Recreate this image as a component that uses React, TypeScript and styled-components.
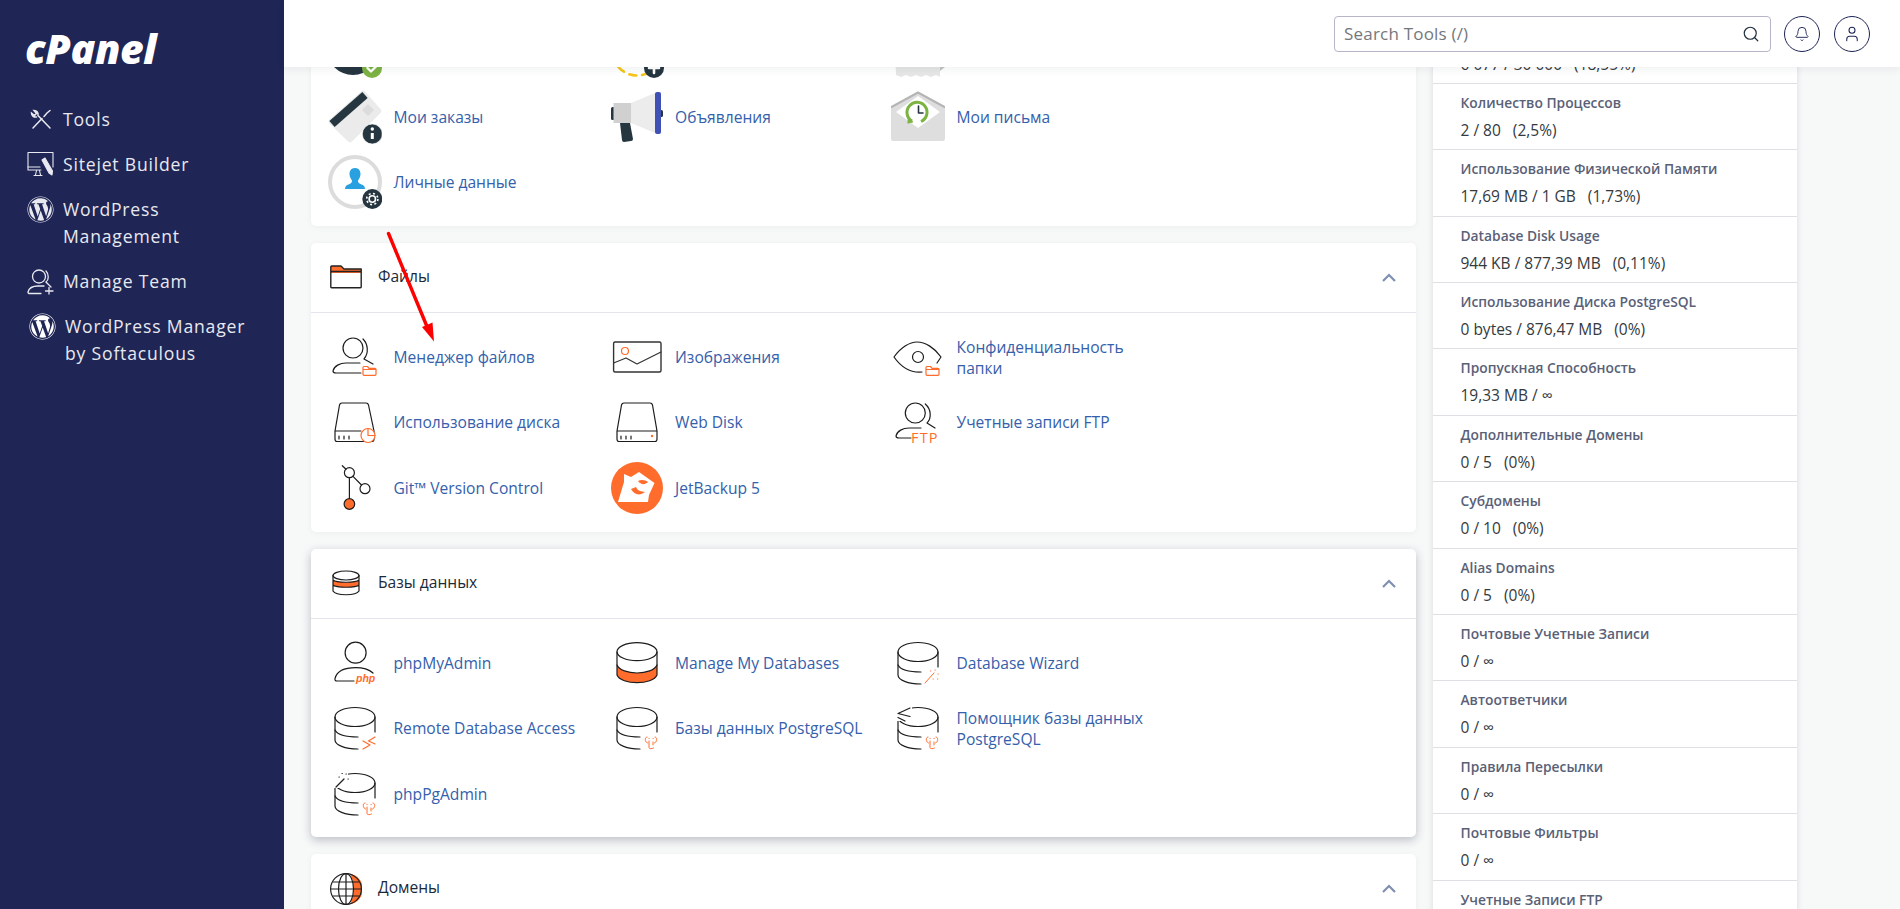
import * as React from "react";
import styled, { createGlobalStyle } from "styled-components";
import { Search, Bell, User } from "lucide-react";
import { FaWordpress } from "react-icons/fa";

const ORANGE = "#ff6c2c";
const INK = "#1c1c1c";
const DARK = "#263640";

const GlobalStyle = createGlobalStyle`
  html, body {
    margin: 0;
    height: 100%;
    overflow: hidden;
    background: #f7f8f8;
    font-family: "Open Sans", "Noto Sans", sans-serif;
  }
`;

const Page = styled.div`
  position: relative;
  display: flex;
  height: 909px;
  overflow: hidden;
`;

const Sidebar = styled.aside`
  flex: 0 0 284px;
  padding: 27px 0 0 27px;
  box-sizing: border-box;
  background: #1f2555;
  color: #e8e9f0;
`;

const Logo = styled.div`
  height: 78.5px;
  margin-left: -2px;
  font-size: 41px;
  line-height: 42px;
  font-weight: 800;
  font-style: italic;
  letter-spacing: -0.4px;
  color: #fff;
`;

const Nav = styled.nav`
  display: flex;
  flex-direction: column;
  gap: 18px;
`;

const NavItem = styled.a<{ $nudge?: number }>`
  display: flex;
  align-items: flex-start;
  gap: 9px;
  box-sizing: border-box;
  width: ${(p) => 231 + (p.$nudge || 0)}px;
  padding-left: ${(p) => p.$nudge || 0}px;
  font-size: 17.6px;
  line-height: 27px;
  letter-spacing: 0.8px;
`;

const NavIcon = styled.span`
  flex: 0 0 27px;
  height: 27px;
  display: flex;
  align-items: center;
  justify-content: center;
  color: #e8e9f0;
`;

const Main = styled.div`
  flex: 1;
  min-width: 0;
  display: flex;
  flex-direction: column;
`;

const TopBar = styled.header`
  position: relative;
  z-index: 2;
  flex: 0 0 67px;
  display: flex;
  align-items: center;
  justify-content: flex-end;
  gap: 14px;
  padding: 0 30px 0 0;
  background: #fff;
  box-shadow: 0 2px 8px rgba(30, 40, 60, 0.07);
`;

const SearchBox = styled.div`
  width: 437px;
  height: 36px;
  box-sizing: border-box;
  display: flex;
  align-items: center;
  justify-content: space-between;
  padding: 0 10px 0 9px;
  margin-right: -1px;
  border: 1px solid #b7b6c9;
  border-radius: 4px;
  color: #74777c;
  font-size: 17px;
  letter-spacing: 0.2px;
  svg {
    color: #1f2d3d;
  }
`;

const RoundButton = styled.button`
  width: 36px;
  height: 36px;
  padding: 0;
  display: flex;
  align-items: center;
  justify-content: center;
  border: 1px solid #1f2555;
  border-radius: 50%;
  background: #fff;
  color: #1f2555;
`;

const Content = styled.div`
  flex: 1;
  min-height: 0;
  overflow: hidden;
  display: flex;
  align-items: flex-start;
  gap: 17px;
  padding-left: 27px;
`;

const CardColumn = styled.div`
  flex: 0 0 1105px;
  margin-top: -60px;
  display: flex;
  flex-direction: column;
  gap: 17px;
`;

const Card = styled.section<{ $raised?: boolean }>`
  background: #fff;
  border-radius: 5px;
  box-shadow: ${(p) =>
    p.$raised
      ? "0 3px 10px rgba(30, 40, 60, 0.28)"
      : "0 1px 6px rgba(30, 40, 60, 0.05)"};
`;

const CardHeader = styled.div`
  height: 70px;
  box-sizing: border-box;
  display: flex;
  align-items: center;
  gap: 16px;
  padding: 0 20px 0 19px;
  border-bottom: 1px solid #e4e5ec;
  color: #1b2a3a;
  font-size: 15.6px;
`;

const HeaderIcon = styled.span`
  flex: 0 0 32px;
  height: 32px;
`;

const HeaderTitle = styled.span`
  flex: 1;
  padding-bottom: 3px;
`;

const Items = styled.div`
  display: grid;
  grid-template-columns: repeat(3, 281.5px);
  grid-auto-rows: 65.4px;
  padding: 11.6px 0 11px 17px;
`;

const Item = styled.a`
  display: flex;
  align-items: center;
  gap: 11.5px;
  color: #3560ab;
  font-size: 15.6px;
  line-height: 21px;
`;

const ItemIcon = styled.span`
  flex: 0 0 54px;
  height: 54px;
`;

const ItemLabel = styled.span`
  max-width: 200px;
  padding-top: 1px;
`;

const StatsPanel = styled.aside`
  flex: 0 0 364px;
  margin-top: -49.5px;
  background: #fff;
  box-shadow: 0 0 6px rgba(30, 40, 60, 0.14);
`;

const StatRow = styled.div`
  height: 66.4px;
  box-sizing: border-box;
  padding: 10px 0 0 27.5px;
  border-bottom: 1px solid #dfe0e3;
`;

const StatLabel = styled.div`
  height: 18px;
  font-size: 13.8px;
  line-height: 18px;
  font-weight: 600;
  color: #5a6177;
`;

const StatValue = styled.div`
  margin-top: 8px;
  font-size: 15.5px;
  line-height: 20px;
  color: #343a40;
`;

const StatPercent = styled.span`
  margin-left: 12px;
`;

const ArrowLayer = styled.svg`
  position: absolute;
  left: 380px;
  top: 225px;
  z-index: 1;
  pointer-events: none;
`;

const Svg: React.FC<{ size?: number; children: React.ReactNode }> = ({ size = 54, children }) => (
  <svg width={size} height={size} viewBox={`0 0 ${size} ${size}`} fill="none" stroke={INK} strokeWidth={1.2} strokeLinecap="round" strokeLinejoin="round" style={{ display: "block" }}>
    {children}
  </svg>
);

const SmallFolder: React.FC = () => (
  <path d="M35 37.5 a1 1 0 0 1 1-1 h3.5 l1.5 1.8 h6 a1 1 0 0 1 1 1 v5 a1 1 0 0 1-1 1 h-11 a1 1 0 0 1-1-1 z M35 39.5 h13" stroke={ORANGE} fill="#fff" />
);

const PersonLines: React.FC = () => (
  <g>
    <circle cx="25" cy="18" r="10" />
    <path d="M35 9 C40 14 41 23 36 29 L45 34" />
    <path d="M33 43 H8 Q5 43 5 41 C6 36 12 33 18 33 H32" />
  </g>
);

const Db: React.FC = () => (
  <g>
    <ellipse cx="27" cy="16" rx="20" ry="9.5" />
    <path d="M7 16 V39 C7 44 17 48 30 48" />
    <path d="M7 29 C9 33 17 36 30 36" />
    <path d="M47 16 V31" />
  </g>
);

const Elephant: React.FC = () => (
  <g stroke={ORANGE} strokeWidth={1}>
    <path d="M37 36 C34.5 36 34.500 41 37.500 42" />
    <path d="M45 36 C47.500 36 47.500 41 44.500 42" />
    <path d="M39 40 V46.500 C39 48 42 48 43.500 47" />
    <path d="M43 41 V44" />
    <path d="M39 37.500 h.2 M43 37.500 h.2" />
  </g>
);

const icons: Record<string, React.ReactNode> = {
  check: (
    <Svg>
      <circle cx="25" cy="25" r="26" fill={DARK} stroke="none" />
      <circle cx="44" cy="44" r="10" fill="#7cb342" stroke="none" />
      <path d="M39.5 44 l3.5 3.5 l6-6" stroke="#fff" strokeWidth={2.4} />
    </Svg>
  ),
  dashed: (
    <Svg>
      <circle cx="27" cy="27" r="24.5" stroke="#f5c518" strokeWidth={2.6} strokeDasharray="7 6" />
      <circle cx="44" cy="44" r="10" fill={DARK} stroke="none" />
      <path d="M39 44 h10 M44 39 v10" stroke="#fff" strokeWidth={2.6} />
    </Svg>
  ),
  receipt: (
    <Svg>
      <path d="M3 0 H49 V53 l-4-2 l-5 2 l-5-2 l-5 2 l-5-2 l-5 2 l-5-2 l-5 2 l-5-2 z" fill="#e6e6e6" stroke="none" />
      <path d="M49 47 L54 43 V0 H49 z" fill="#c4c4c4" stroke="none" />
    </Svg>
  ),
  orders: (
    <Svg>
      <path d="M33 1.5 a3 3 0 0 1 4 0 L52.5 19 a3 3 0 0 1 0 4 L24 51.5 a3 3 0 0 1-4 0 L1.5 33.5 a3 3 0 0 1 0-4 z" fill="#ebebeb" stroke="none" />
      <path d="M4 34 L37 5" stroke={DARK} strokeWidth={8} strokeLinecap="butt" />
      <path d="M40 14 L46 20 L40 26 L34 20 z" fill="#dcdcdc" stroke="none" />
      <circle cx="44.3" cy="44" r="10" fill={DARK} stroke="#fff" strokeWidth={0.6} />
      <path d="M44.3 43 v6" stroke="#fff" strokeWidth={3} strokeLinecap="butt" />
      <circle cx="44.3" cy="39" r="1.7" fill="#fff" stroke="none" />
    </Svg>
  ),
  megaphone: (
    <Svg>
      <path d="M10 33 H20 L23 49 a2 2 0 0 1-2 2 L14 52 a2 2 0 0 1-2-2 z" fill={DARK} stroke="none" />
      <rect x="1" y="17" width="4" height="13" rx="1.5" fill={DARK} stroke="none" />
      <rect x="3.5" y="13" width="18" height="20" fill="#d0d0d0" stroke="none" />
      <path d="M21 13 L45 3 V43 L21 33 z" fill="#ececec" stroke="none" />
      <rect x="50" y="20" width="3" height="7" rx="1.5" fill={DARK} stroke="none" />
      <rect x="45" y="2" width="6" height="42" rx="2" fill="#3f51b5" stroke="none" />
    </Svg>
  ),
  mail: (
    <Svg>
      <path d="M0 17 L27 2.5 L54 17 V49 a2 2 0 0 1-2 2 H2 a2 2 0 0 1-2-2 z" fill="#dedede" stroke="none" />
      <path d="M0.5 17 L27 2.5 L53.5 17" stroke="#b5b5b5" strokeWidth={2} />
      <path d="M27 6 L49 22 L27 38 L5 22 z" fill="#fff" stroke="none" />
      <path d="M21 31 A10 10 0 1 1 30 31.5" stroke="#7cb342" strokeWidth={3} strokeLinecap="butt" />
      <path d="M17.5 26.5 L21.5 32 L17 33 z" fill="#7cb342" stroke="#7cb342" />
      <path d="M27.5 16 V23 H32" stroke={DARK} strokeWidth={1.6} />
    </Svg>
  ),
  profile: (
    <Svg>
      <circle cx="27" cy="27" r="25" stroke="#dcdcdc" strokeWidth={4} />
      <path d="M27 13 c4 0 5.5 3 5.5 6 c0 3-1.5 5-2.5 6.5 c0 2.5 1 3 3.5 4 c2 .8 3.5 1.5 3.5 4.5 H17 c0-3 1.5-3.7 3.5-4.5 c2.5-1 3.5-1.5 3.5-4 c-1-1.5-2.5-3.5-2.5-6.5 c0-3 1.5-6 5.500-6 z" fill="#29a0e0" stroke="none" />
      <circle cx="44.3" cy="44" r="10" fill={DARK} stroke="none" />
      <circle cx="44.3" cy="44" r="3.2" stroke="#fff" strokeWidth={1.6} />
      <circle cx="44.3" cy="44" r="5.6" stroke="#fff" strokeWidth={1.6} strokeDasharray="2 2.400" strokeLinecap="butt" />
    </Svg>
  ),
  fileManager: (
    <Svg>
      <PersonLines />
      <SmallFolder />
    </Svg>
  ),
  images: (
    <Svg>
      <rect x="3.6" y="12" width="47.4" height="30" rx="1.5" stroke="#333" strokeWidth={1.4} />
      <circle cx="15" cy="21" r="3.5" stroke={ORANGE} />
      <path d="M3.6 33 L16 28 L27 34 L51 22" stroke="#333" />
    </Svg>
  ),
  eye: (
    <Svg>
      <path d="M31 42 C20 43 10 37 3 27 C10 17 19 12 26 12 C34 12 44 18 50 27 L46 33" />
      <circle cx="27" cy="27" r="5.5" />
      <SmallFolder />
    </Svg>
  ),
  diskUsage: (
    <Svg>
      <path d="M7 36 L11.500 10 Q12 8 14 8 H38 Q40 8 40.500 10 L46 36 V44 Q46 46.500 44 46.500 H9 Q7 46.500 7 44 z M7 36 H33" />
      <path d="M11 44 v-3 M16 44 v-3 M21 44 v-3" />
      <circle cx="40" cy="40.500" r="7" fill="#fff" stroke={ORANGE} />
      <path d="M40 33.500 V40.500 H47" stroke={ORANGE} />
    </Svg>
  ),
  webDisk: (
    <Svg>
      <path d="M7 36 L11.500 10 Q12 8 14 8 H40 Q42 8 42.500 10 L47 36 V44 Q47 46.500 45 46.500 H9 Q7 46.500 7 44 z M7 36 H47" />
      <path d="M11 44 v-3 M16 44 v-3 M21 44 v-3" />
      <circle cx="42" cy="41" r="1.2" fill={ORANGE} stroke="none" />
    </Svg>
  ),
  ftp: (
    <Svg>
      <circle cx="24.300" cy="18" r="10" />
      <path d="M34.300 9 C40 14 41 23 36 28 L44 33" />
      <path d="M20 43 H8 Q5 43 5 41 C6 36 12 33 18 33 H30" />
      <text x="20" y="47.500" fontFamily="'Open Sans', sans-serif" fontSize="14.500" letterSpacing="1.200" fill={ORANGE} stroke="none">FTP</text>
    </Svg>
  ),
  git: (
    <Svg>
      <path d="M14.300 4.700 L18 8.300" />
      <circle cx="21.400" cy="11.700" r="5" />
      <circle cx="37" cy="27.700" r="5" />
      <path d="M25 15.300 L33.500 24 M21.400 16.700 V38" />
      <circle cx="21.400" cy="43" r="5.300" fill={ORANGE} />
    </Svg>
  ),
  jet: (
    <Svg>
      <circle cx="27" cy="27" r="26" fill={ORANGE} stroke="none" />
      <path d="M8 41 L14 21 L14 13 L21 16 L29 11 L44.500 22 L39 34 L38 41 z" fill="#fff" stroke="none" />
      <path d="M28 20 C31 18 36 19 38 21 C35 24 31 24 28 20 z" fill={ORANGE} stroke="none" />
      <path d="M21 28 C24 34 30 35 35 31 C32 30 28 31 26 26 z" fill={ORANGE} stroke="none" />
    </Svg>
  ),
  php: (
    <Svg>
      <circle cx="27.600" cy="16.700" r="10.500" />
      <path d="M26 45 H9 Q6.500 45 7 42.500 C9 35 17 31.700 27.600 31.700 C34 31.700 41 33.500 45 37" />
      <text x="28" y="46" fontFamily="'Liberation Sans', sans-serif" fontSize="10.500" fontWeight="700" fontStyle="italic" fill={ORANGE} stroke="none">php</text>
    </Svg>
  ),
  manageDb: (
    <Svg>
      <path d="M7 29 C9 34 18 37 27 37 C36 37 45 34 47 29 V39 C45 44 36 46.700 27 46.700 C18 46.700 9 44 7 39 z" fill={ORANGE} stroke="none" />
      <ellipse cx="27" cy="15.700" rx="20" ry="9" />
      <path d="M7 16 V39 C9 44 18 46.700 27 46.700 C36 46.700 45 44 47 39 V16" />
      <path d="M7 29 C9 34 18 37 27 37 C36 37 45 34 47 29" />
    </Svg>
  ),
  dbWizard: (
    <Svg>
      <Db />
      <g stroke={ORANGE} strokeWidth={1}>
        <path d="M34 47 L43 37 M44 34 h.3 M39.500 35 h.3 M47 38 h.3 M46.500 43 h.3 M42 43 h.3" />
      </g>
    </Svg>
  ),
  remoteDb: (
    <Svg>
      <Db />
      <path d="M35 40 L42 44 L35 48 M47 36 L40.500 40 L47 43" stroke={ORANGE} />
    </Svg>
  ),
  pgDb: (
    <Svg>
      <Db />
      <Elephant />
    </Svg>
  ),
  pgWizard: (
    <Svg>
      <Db />
      <rect x="4" y="5" width="17" height="15" fill="#fff" stroke="none" />
      <path d="M19 7 L7 12.500 L19 15.500 M7 16.500 L14 20" />
      <Elephant />
    </Svg>
  ),
  pgAdmin: (
    <Svg>
      <Db />
      <rect x="5" y="5" width="15" height="16" fill="#fff" stroke="none" />
      <path d="M8 20 L16 12 M18 7 h.3 M14 6.500 h.3 M20 12 h.3 M11 10 h.3" />
      <Elephant />
    </Svg>
  ),
};

const FolderHeading: React.FC = () => (
  <Svg size={32}>
    <path d="M.8 6 a1 1 0 0 1 1-1 H11 L14 8 H31.200 V12 H.8 z" fill={ORANGE} stroke="none" />
    <path d="M.8 10.500 H31.200 V26 a.8 .8 0 0 1-.8 .8 H1.600 a.8 .8 0 0 1-.8-.8 V6 a1 1 0 0 1 1-1 H11 L14 8 H31.200 V11" stroke="#222" strokeWidth={1.4} />
  </Svg>
);

const DbHeading: React.FC = () => (
  <Svg size={32}>
    <path d="M3 13 C6 16 26 16 29 13 V18 C26 21 6 21 3 18 z" fill={ORANGE} stroke="none" />
    <ellipse cx="16" cy="8.500" rx="13" ry="4.500" />
    <path d="M3 8.500 V24 C6 29 26 29 29 24 V8.500 M3 13 C6 16 26 16 29 13 M3 18 C6 21 26 21 29 18" />
  </Svg>
);

const GlobeHeading: React.FC = () => (
  <Svg size={32}>
    <path d="M20 .8 A15.400 15.400 0 0 1 20 31.200 C25 22 25 10 20 .8 z" fill={ORANGE} stroke="none" />
    <circle cx="16" cy="16" r="15.400" stroke="#222" strokeWidth={1.2} />
    <ellipse cx="16" cy="16" rx="7.500" ry="15.400" />
    <path d="M16 .6 V31.400 M.6 16 H31.400 M3 9 H29 M3 23 H29" />
  </Svg>
);

const ToolsIcon: React.FC = () => (
  <svg width="22" height="22" viewBox="0 0 22 22" fill="none" stroke="#e8e9f0" strokeWidth="1.500" strokeLinecap="round">
    <path d="M3 20 L12 10.500 M14 8.500 L17 5 L20 2.500" />
    <path d="M20 20 L8 7.500 C8.500 5 7 2.500 4 2.500 L6.500 5.500 L4.500 7.500 L1.500 5 C1.500 8 4 9.500 6.500 9" />
  </svg>
);

const SitejetIcon: React.FC = () => (
  <svg width="27" height="27" viewBox="0 0 27 27" fill="none" stroke="#e8e9f0" strokeWidth="1.100" strokeLinecap="round" strokeLinejoin="round">
    <path d="M14 19 H1 V1.500 H26 V16" />
    <path d="M1 16 H13" />
    <path d="M7 24.500 H15 M9.500 19.500 L8.500 24 M12.500 19.500 L13.500 24" />
    <path d="M15 9 L18 7 L25.500 20 L25 24 L22 22 z" fill="#e8e9f0" />
  </svg>
);

const TeamIcon: React.FC = () => (
  <svg width="27" height="27" viewBox="0 0 27 27" fill="none" stroke="#e8e9f0" strokeWidth="1.300" strokeLinecap="round">
    <circle cx="12" cy="8.500" r="6.500" />
    <path d="M19 3 C22 6 22 12 19 14 L24 19" />
    <path d="M14 25.500 H3 Q.8 25.500 1 24 C2 20 6 18 11 18 H17" />
    <path d="M22 19.500 V26 M18.500 23 H26" />
  </svg>
);

type Entry = { icon: string; label?: string };

const profileItems: Entry[] = [
  { icon: "check" },
  { icon: "dashed" },
  { icon: "receipt" },
  { icon: "orders", label: "Мои заказы" },
  { icon: "megaphone", label: "Объявления" },
  { icon: "mail", label: "Мои письма" },
  { icon: "profile", label: "Личные данные" },
];

const fileItems: Entry[] = [
  { icon: "fileManager", label: "Менеджер файлов" },
  { icon: "images", label: "Изображения" },
  { icon: "eye", label: "Конфиденциальность папки" },
  { icon: "diskUsage", label: "Использование диска" },
  { icon: "webDisk", label: "Web Disk" },
  { icon: "ftp", label: "Учетные записи FTP" },
  { icon: "git", label: "Git™ Version Control" },
  { icon: "jet", label: "JetBackup 5" },
];

const dbItems: Entry[] = [
  { icon: "php", label: "phpMyAdmin" },
  { icon: "manageDb", label: "Manage My Databases" },
  { icon: "dbWizard", label: "Database Wizard" },
  { icon: "remoteDb", label: "Remote Database Access" },
  { icon: "pgDb", label: "Базы данных PostgreSQL" },
  { icon: "pgWizard", label: "Помощник базы данных PostgreSQL" },
  { icon: "pgAdmin", label: "phpPgAdmin" },
];

const stats: { label: string; value: string; percent?: string }[] = [
  { label: "", value: "6 077 / 30 000", percent: "(18,55%)" },
  { label: "Количество Процессов", value: "2 / 80", percent: "(2,5%)" },
  { label: "Использование Физической Памяти", value: "17,69 MB / 1 GB", percent: "(1,73%)" },
  { label: "Database Disk Usage", value: "944 KB / 877,39 MB", percent: "(0,11%)" },
  { label: "Использование Диска PostgreSQL", value: "0 bytes / 876,47 MB", percent: "(0%)" },
  { label: "Пропускная Способность", value: "19,33 MB / ∞" },
  { label: "Дополнительные Домены", value: "0 / 5", percent: "(0%)" },
  { label: "Субдомены", value: "0 / 10", percent: "(0%)" },
  { label: "Alias Domains", value: "0 / 5", percent: "(0%)" },
  { label: "Почтовые Учетные Записи", value: "0 / ∞" },
  { label: "Автоответчики", value: "0 / ∞" },
  { label: "Правила Пересылки", value: "0 / ∞" },
  { label: "Почтовые Фильтры", value: "0 / ∞" },
  { label: "Учетные Записи FTP", value: "0 / ∞" },
];

const Chevron: React.FC = () => (
  <svg width="14" height="9" viewBox="0 0 14 9" fill="none" stroke="#7f90b2" strokeWidth="2.200">
    <path d="M1 8 L7 2 L13 8" />
  </svg>
);

const ItemGrid: React.FC<{ items: Entry[] }> = ({ items }) => (
  <Items>
    {items.map((item) => (
      <Item key={item.icon}>
        <ItemIcon>{icons[item.icon]}</ItemIcon>
        {item.label && <ItemLabel>{item.label}</ItemLabel>}
      </Item>
    ))}
  </Items>
);

const Section: React.FC<{ icon: React.ReactNode; title: string; raised?: boolean; items?: Entry[] }> = ({ icon, title, raised, items }) => (
  <Card $raised={raised}>
    <CardHeader>
      <HeaderIcon>{icon}</HeaderIcon>
      <HeaderTitle>{title}</HeaderTitle>
      <Chevron />
    </CardHeader>
    {items && <ItemGrid items={items} />}
  </Card>
);

const App: React.FC = () => {
  return (
    <Page>
      <GlobalStyle />
      <Sidebar>
        <Logo>cPanel</Logo>
        <Nav>
          <NavItem>
            <NavIcon>
              <ToolsIcon />
            </NavIcon>
            Tools
          </NavItem>
          <NavItem>
            <NavIcon>
              <SitejetIcon />
            </NavIcon>
            Sitejet Builder
          </NavItem>
          <NavItem>
            <NavIcon>
              <FaWordpress size={27} />
            </NavIcon>
            WordPress Management
          </NavItem>
          <NavItem>
            <NavIcon>
              <TeamIcon />
            </NavIcon>
            Manage Team
          </NavItem>
          <NavItem $nudge={2}>
            <NavIcon>
              <FaWordpress size={27} color="#fff" />
            </NavIcon>
            WordPress Manager by Softaculous
          </NavItem>
        </Nav>
      </Sidebar>
      <Main>
        <TopBar>
          <SearchBox>
            Search Tools (/)
            <Search size={18} strokeWidth={1.6} />
          </SearchBox>
          <RoundButton>
            <Bell size={16} strokeWidth={1.4} />
          </RoundButton>
          <RoundButton>
            <User size={18} strokeWidth={1.4} />
          </RoundButton>
        </TopBar>
        <Content>
          <CardColumn>
            <Card>
              <ItemGrid items={profileItems} />
            </Card>
            <Section icon={<FolderHeading />} title="Файлы" items={fileItems} />
            <Section icon={<DbHeading />} title="Базы данных" raised items={dbItems} />
            <Section icon={<GlobeHeading />} title="Домены" />
          </CardColumn>
          <StatsPanel>
            {stats.map((s, i) => (
              <StatRow key={i}>
                <StatLabel>{s.label}</StatLabel>
                <StatValue>
                  {s.value}
                  {s.percent && <StatPercent>{s.percent}</StatPercent>}
                </StatValue>
              </StatRow>
            ))}
          </StatsPanel>
        </Content>
      </Main>
      <ArrowLayer width="60" height="125" viewBox="0 0 60 125">
        <path d="M8.500 8.500 L48 104" stroke="#f00" strokeWidth="3.400" strokeLinecap="round" />
        <path d="M42 102 L54 116.500 L52.500 97.500 z" fill="#f00" />
      </ArrowLayer>
    </Page>
  );
};

export default App;
